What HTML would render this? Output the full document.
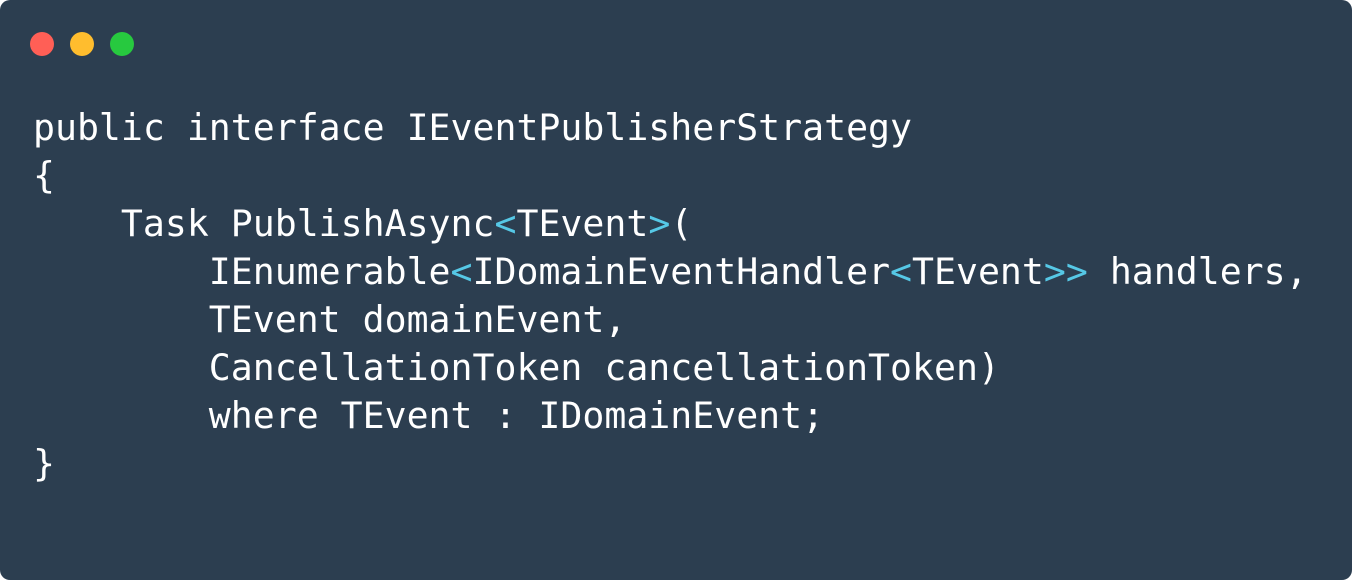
<!DOCTYPE html>
<html><head><style>
html,body{margin:0;padding:0;background:#fff;}
.w{position:relative;width:1352px;height:580px;background:#2c3e50;border-radius:10px;overflow:hidden;}
.d{position:absolute;top:32px;width:24px;height:24px;border-radius:50%;}
pre{position:absolute;left:33px;top:104px;margin:0;font-family:"DejaVu Sans Mono","Liberation Mono",monospace;font-size:36.5px;line-height:48px;color:#fff;}
.c{color:#56c8e6;}
</style></head><body>
<div class="w">
<div class="d" style="left:30px;background:#ff5f56"></div>
<div class="d" style="left:70px;background:#ffbd2e"></div>
<div class="d" style="left:110px;background:#27c93f"></div>
<pre>public interface IEventPublisherStrategy
{
    Task PublishAsync<span class="c">&lt;</span>TEvent<span class="c">&gt;</span>(
        IEnumerable<span class="c">&lt;</span>IDomainEventHandler<span class="c">&lt;</span>TEvent<span class="c">&gt;&gt;</span> handlers,
        TEvent domainEvent,
        CancellationToken cancellationToken)
        where TEvent : IDomainEvent;
}</pre>
</div>
</body></html>
